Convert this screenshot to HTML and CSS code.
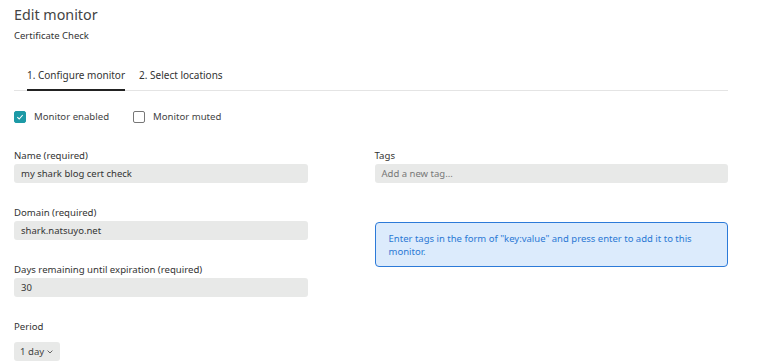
FILE: index.html
```html
<!DOCTYPE html>
<html lang="en">
<head>
  <meta charset="UTF-8">
  <title>Edit monitor</title>
  <link rel="stylesheet" href="styles.css">
</head>
<body>

<div class="page">
  <h1 class="title">Edit monitor</h1>
  <div class="subtitle">Certificate Check</div>

  <div class="tabs">
    <div class="tab active">1. Configure monitor</div>
    <div class="tab">2. Select locations</div>
  </div>

  <div class="checks">
    <label class="check">
      <span class="box checked">
        <svg width="8" height="8" viewBox="0 0 8 8"><path d="M1.3 4.2 L3.2 6 L6.7 2" fill="none" stroke="#fff" stroke-width="1.1"/></svg>
      </span>
      Monitor enabled
    </label>
    <label class="check">
      <span class="box"></span>
      Monitor muted
    </label>
  </div>

  <div class="columns">
    <div class="col">
      <div class="field">
        <div class="label">Name (required)</div>
        <div class="input">my shark blog cert check</div>
      </div>
      <div class="field">
        <div class="label">Domain (required)</div>
        <div class="input">shark.natsuyo.net</div>
      </div>
      <div class="field">
        <div class="label">Days remaining until expiration (required)</div>
        <div class="input">30</div>
      </div>
      <div class="field">
        <div class="label">Period</div>
        <div class="select">1 day
          <svg width="6" height="4" viewBox="0 0 6 4"><path d="M0.6 0.6 L3 3 L5.4 0.6" fill="none" stroke="#555" stroke-width="0.9"/></svg>
        </div>
      </div>
    </div>

    <div class="col">
      <div class="field">
        <div class="label">Tags</div>
        <div class="input placeholder">Add a new tag...</div>
      </div>
      <div class="info">Enter tags in the form of "key:value" and press enter to add it to this monitor.</div>
    </div>
  </div>
</div>

</body>
</html>
```

FILE: styles.css
```css
*, *::before, *::after {
  box-sizing: border-box;
}

body {
  font-family: "Noto Sans", "Open Sans", sans-serif;
  background-color: #ffffff;
  color: #333;
  margin: 0;
}

.page {
  padding: 6px 14px 0 14px;
  width: 742px;
}

.title {
  font-size: 14.3px;
  font-weight: 400;
  color: #444;
  margin: 0;
  line-height: 18px;
}

.subtitle {
  font-size: 9.5px;
  color: #333;
  margin-top: 5px;
  line-height: 13px;
}

.tabs {
  display: flex;
  margin-top: 24px;
  border-bottom: 1px solid #e4e4e4;
  padding-left: 13px;
}

.tab {
  font-size: 10px;
  color: #333;
  padding: 3px 0 7px 0;
  margin-right: 14px;
  line-height: 13px;
  border-bottom: 2px solid transparent;
  margin-bottom: -1px;
}

.tab.active {
  border-bottom-color: #222;
}

.checks {
  display: flex;
  gap: 24px;
  margin-top: 19px;
}

.check {
  display: flex;
  align-items: center;
  gap: 8px;
  font-size: 9.6px;
  color: #444;
  line-height: 13px;
}

.box {
  width: 12px;
  height: 12px;
  border: 1px solid #777;
  border-radius: 2px;
  display: flex;
  align-items: center;
  justify-content: center;
}

.box.checked {
  background: #1d9aa6;
  border-color: #1d9aa6;
}

.columns {
  display: flex;
  gap: 67px;
  margin-top: 26px;
}

.col {
  width: 294px;
}

.col + .col {
  width: 354px;
}

.field {
  margin-bottom: 23px;
}

.col .field:last-child {
  margin-bottom: 0;
}

.label {
  font-size: 9.6px;
  color: #333;
  line-height: 13px;
  margin-bottom: 2px;
}

.input {
  background: #e8e9e8;
  border-radius: 3px;
  height: 19px;
  font-size: 9.5px;
  color: #333;
  line-height: 19px;
  padding: 0 7px;
}

.input.placeholder {
  color: #777;
}

.select {
  display: inline-flex;
  align-items: center;
  gap: 3px;
  background: #e8e9e8;
  border-radius: 3px;
  height: 19px;
  font-size: 9.6px;
  color: #444;
  padding: 0 7px 0 6px;
  margin-top: 7px;
}

.info {
  margin-top: 39px;
  background: #dcebfc;
  border: 1px solid #2c7ad8;
  border-radius: 4px;
  color: #2a78d4;
  font-size: 9.5px;
  line-height: 13px;
  padding: 9px 14px 8px 13px;
}
```
